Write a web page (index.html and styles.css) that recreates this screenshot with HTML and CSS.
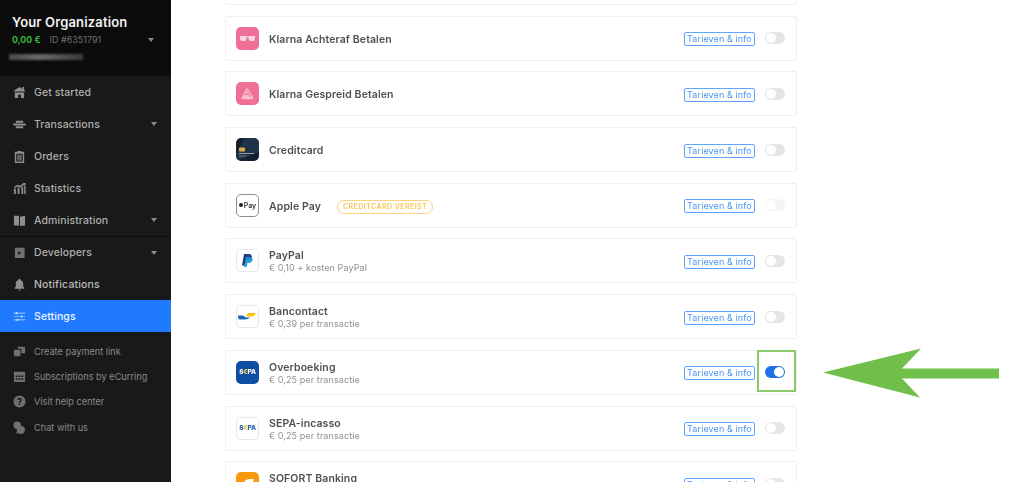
FILE: index.html
```html
<!DOCTYPE html>
<html lang="nl">
<head>
<meta charset="utf-8">
<title>Betaalmethoden</title>
<link rel="stylesheet" href="styles.css">
</head>
<body>
<aside class="sidebar">
  <header class="org">
    <div class="org-name">Your Organization</div>
    <div class="org-meta"><span class="balance">0,00 €</span><span class="org-id">ID #6351791</span><span class="caret org-caret"></span></div>
    <div class="org-blur"></div>
  </header>
  <nav class="nav">
    <a class="nav-item"><svg class="ico" viewBox="0 0 14 14"><path d="M7 1 13 5v1H1V5zM10 1h2v3h-2zM2 7h10v6H8.500V9.500h-3V13H2z"/></svg>Get started</a>
    <a class="nav-item"><svg class="ico" viewBox="0 0 14 14"><path d="M3 3h8v2H3zM1 6h12a1 1 0 0 1 0 2H1a1 1 0 0 1 0-2zM3 9h8v2H3z"/></svg>Transactions<span class="caret"></span></a>
    <a class="nav-item"><svg class="ico" viewBox="0 0 14 14"><path fill-rule="evenodd" d="M2 2h3V1h4v1h3v12H2zM3.500 4v8.500h7V4z"/><path d="M4.500 5h5v6.500h-5z" opacity=".6"/></svg>Orders</a>
    <a class="nav-item"><svg class="ico" viewBox="0 0 14 14"><path d="M1 7h2v6H1zM5 6h2v7H5zM9 5h2v8H9zM12 4h1.500v9H12zM1 5l4-2 3 1 3-3h2.500v2.500H11L8 6 5 4.800 1.500 6.500z"/></svg>Statistics</a>
    <a class="nav-item"><svg class="ico" viewBox="0 0 14 14"><path d="M1 2h5.500v10.500H1zM7.500 3 13 2v10.500l-5.500.500z"/></svg>Administration<span class="caret"></span></a>
    <a class="nav-item nav-item-sep"><svg class="ico" viewBox="0 0 14 14"><path fill-rule="evenodd" d="M2 2h10.500v11H2zM5.500 5.500v4l3.500-2z" opacity=".75"/></svg>Developers<span class="caret"></span></a>
    <a class="nav-item nav-strong"><svg class="ico" viewBox="0 0 14 14"><path d="M6 1h2v1.200A4 4 0 0 1 11 6v3l1.500 2.500h-11L3 9V6a4 4 0 0 1 3-3.800zM5.500 12.500h3L7 14z"/></svg>Notifications</a>
    <a class="nav-item nav-active"><svg class="ico" viewBox="0 0 14 14"><path d="M1 3h12v.8H1zM1 6.600h12v.8H1zM1 10.200h12v.8H1z"/><path d="M3 2.200h1.500v2.400H3zM8.500 5.800H10v2.400H8.500zM4 9.400h1.500v2.400H4z"/></svg>Settings</a>
    <div class="subnav">
      <a class="sub-item"><svg class="ico ico-s" viewBox="0 0 14 14"><path d="M1 5h7v7H2a1 1 0 0 1-1-1z"/><path d="M5 2h7a1 1 0 0 1 1 1v6H9V4H5z"/></svg>Create payment link</a>
      <a class="sub-item"><svg class="ico ico-s" viewBox="0 0 14 14"><path fill-rule="evenodd" d="M1 2h12v11H1zM3 6v1.500h2V6zM6 6v1.500h2V6zM9 6v1.500h2V6zM3 9v1.500h2V9zM6 9v1.500h2V9zM9 9v1.500h2V9z"/></svg>Subscriptions by eCurring</a>
      <a class="sub-item"><svg class="ico ico-s" viewBox="0 0 14 14"><path fill-rule="evenodd" d="M7 .500a6.500 6.500 0 1 1 0 13 6.500 6.500 0 0 1 0-13zM7 3a2.500 2.500 0 0 0-2.500 2.500H6q0-1 1-1t1 1c0 1-1.800 1.200-1.800 3h1.500c0-1.200 1.800-1.500 1.800-3A2.500 2.500 0 0 0 7 3zM6.200 9.300v1.500h1.500V9.300z"/></svg>Visit help center</a>
      <a class="sub-item"><svg class="ico ico-s" viewBox="0 0 14 14"><circle cx="4.500" cy="4.500" r="4"/><path d="M8.500 5a4.500 4.500 0 1 1-2.500 8.300L3.500 14l.8-3A4.500 4.500 0 0 1 8.500 5z"/></svg>Chat with us</a>
    </div>
  </nav>
</aside>
<main class="main">
  <ul class="methods">
    <li class="card"></li>
    <li class="card">
      <span class="logo logo-klarna"><svg viewBox="0 0 23 23"><path d="M4 9h6.500v2.500a2.500 2.500 0 0 1-2.500 2.500H6.500A2.500 2.500 0 0 1 4 11.500zM12.500 9H19v2.500a2.500 2.500 0 0 1-2.500 2.500H15a2.500 2.500 0 0 1-2.500-2.500zM10 9.500h3v1h-3z" fill="#fff" opacity=".7"/></svg></span>
      <div class="info"><div class="name">Klarna Achteraf Betalen</div></div>
      <a class="rates">Tarieven &amp; info</a><span class="toggle"></span>
    </li>
    <li class="card">
      <span class="logo logo-klarna"><svg viewBox="0 0 23 23"><path d="M11 5.500 18 16.500Q11 18.500 5 16.500z" fill="#fff" opacity=".55"/><path d="M11 8 15 15M8 14l5-3M9 10.500l4.500 3.500" stroke="#ef6f97" stroke-width=".8" fill="none"/></svg></span>
      <div class="info"><div class="name">Klarna Gespreid Betalen</div></div>
      <a class="rates">Tarieven &amp; info</a><span class="toggle"></span>
    </li>
    <li class="card">
      <span class="logo logo-card"><svg viewBox="0 0 23 23"><path d="M9 0h14v14L0 23V16z" fill="#2a4560" opacity=".55"/><rect x="3" y="9.500" width="6" height="4" rx="1" fill="#d9ad4e"/><rect x="3" y="15" width="15" height="1" fill="#8b98a6"/><rect x="3" y="17.500" width="7" height="1" fill="#6e7c8a"/></svg></span>
      <div class="info"><div class="name">Creditcard</div></div>
      <a class="rates">Tarieven &amp; info</a><span class="toggle"></span>
    </li>
    <li class="card">
      <span class="logo logo-apple"><span class="apple-dot"></span>Pay</span>
      <div class="info info-row"><div class="name">Apple Pay</div><span class="badge">CREDITCARD VEREIST</span></div>
      <a class="rates">Tarieven &amp; info</a><span class="toggle toggle-off"></span>
    </li>
    <li class="card">
      <span class="logo logo-plain"><svg viewBox="0 0 23 23"><path d="M8 5h5.500a3 3 0 0 1 2 4.500c-.8 1.800-2.200 2.200-4 2.200h-1.200L9.500 16.500H6z" fill="#253b80"/><path d="M10 8h4.500c2.500.500 2.500 2.500 1.700 4-.8 1.500-2.200 2-3.700 2h-1l-.8 4H8z" fill="#179bd7" opacity=".9"/></svg></span>
      <div class="info"><div class="name">PayPal</div><div class="sub">€ 0,10 + kosten PayPal</div></div>
      <a class="rates">Tarieven &amp; info</a><span class="toggle"></span>
    </li>
    <li class="card">
      <span class="logo logo-plain"><svg viewBox="0 0 23 23"><path d="M10 10h10q-2 3.500-5 3.500H10l2-3.500z" fill="#f7c600" transform="translate(0 -2)"/><path d="M2 12h5l3 2h4q-2 2-5 2H4q-2 0-2-2z" fill="#1c66b3" transform="translate(0 -1.500)"/></svg></span>
      <div class="info"><div class="name">Bancontact</div><div class="sub">€ 0,39 per transactie</div></div>
      <a class="rates">Tarieven &amp; info</a><span class="toggle"></span>
    </li>
    <li class="card">
      <span class="logo logo-sepa"><span>S</span><i>€</i><span>PA</span></span>
      <div class="info"><div class="name">Overboeking</div><div class="sub">€ 0,25 per transactie</div></div>
      <a class="rates">Tarieven &amp; info</a><span class="toggle toggle-on"></span>
    </li>
    <li class="card">
      <span class="logo logo-plain logo-sepa-light"><span>S</span><i>€</i><span>PA</span></span>
      <div class="info"><div class="name">SEPA-incasso</div><div class="sub">€ 0,25 per transactie</div></div>
      <a class="rates">Tarieven &amp; info</a><span class="toggle"></span>
    </li>
    <li class="card">
      <span class="logo logo-sofort"><svg viewBox="0 0 23 23"><path d="M7 13q1-6 7-6h4l-1 3h-4q-2 0-3 3z" fill="#fff"/></svg></span>
      <div class="info"><div class="name name-clipped">SOFORT Banking</div></div>
      <a class="rates">Tarieven &amp; info</a><span class="toggle"></span>
    </li>
  </ul>
  <div class="mark-box"></div>
  <svg class="mark-arrow" viewBox="0 0 178 50"><path d="M0 24.500 98 .500 79 20.500H176V30.500H79L97 49.500z"/></svg>
</main>
</body>
</html>
```
FILE: styles.css
```css
* { box-sizing: border-box; }
html, body { height: 100%; }
body {
  margin: 0;
  display: flex;
  height: 482px;
  overflow: hidden;
  background: #fff;
  font-family: Inter, "Liberation Sans", sans-serif;
  filter: blur(.3px);
}
ul { list-style: none; margin: 0; padding: 0; }

/* Sidebar */
.sidebar { width: 171px; flex: none; display: flex; flex-direction: column; background: #191919; }
.org { height: 76px; padding: 14px 12px 0; background: #0b0b0b; }
.org-name { font-size: 13px; line-height: 16px; font-weight: 600; color: #f4f4f4; letter-spacing: .15px; }
.org-meta { display: flex; align-items: center; margin-top: 3px; font-size: 9px; line-height: 14px; }
.balance { color: #38c23f; font-weight: 600; margin-right: 9px; }
.org-id { color: #6f6f6f; }
.org-blur { width: 74px; height: 6px; margin: 7px 0 0 -3px; background: linear-gradient(90deg, #4a4a4a, #6a6a6a 40%, #3c3c3c); filter: blur(1px); }
.caret { margin-left: auto; width: 0; height: 0; border: 3px solid transparent; border-top: 4px solid #8c8c8c; border-bottom: 0; }
.org-caret { margin-right: 5px; }

.nav { flex: 1; }
.nav-item {
  display: flex; align-items: center;
  height: 32px; padding: 0 14px 0 13px;
  font-size: 10.5px; font-weight: 500; color: #aeaeae; letter-spacing: .1px;
}
.nav-item-sep { border-top: 1px solid #0e0e0e; }
.nav-strong { color: #bcbcbc; font-weight: 500; letter-spacing: .15px; }
.nav-active { background: #1f7aff; color: #eef5ff; font-weight: 500; }
.nav-active .ico { fill: #cfe2ff; }
.ico { width: 13px; height: 13px; margin-right: 8px; flex: none; fill: #8f8f8f; }
.ico-s { fill: #707070; }
.subnav { padding-top: 7px; }
.sub-item {
  display: flex; align-items: center;
  height: 25px; padding: 0 13px;
  font-size: 9.2px; color: #8a8a8a;
}
.sub-item:last-child { padding-top: 1px; }

/* Main */
.main { position: relative; flex: 1; min-width: 0; overflow: hidden; padding-left: 54px; }
.methods { display: grid; grid-auto-rows: 45px; row-gap: 10.7px; width: 572px; margin-top: -40px; }
.card {
  display: flex; align-items: center;
  padding: 0 11px 0 10px;
  background: #fff;
  border: 1px solid #efefef;
  border-radius: 2px;
}
.logo {
  position: relative;
  width: 23px; height: 23px; flex: none;
  display: flex; align-items: center; justify-content: center;
  border-radius: 5px; overflow: hidden;
}
.logo svg { width: 23px; height: 23px; display: block; }
.logo-klarna { background: #ef6f97; }
.logo-card { background: #14202e; }
.logo-plain { background: #fff; border: 1px solid #e8e8e8; }
.logo-plain svg { margin: -1px; flex: none; }
.logo-apple { border: 1px solid #8d8d8d; font-size: 7px; font-weight: 600; color: #333; }
.apple-dot { width: 4px; height: 4px; margin-right: 1px; border-radius: 50%; background: #222; }
.logo-sepa, .logo-sepa-light { font-size: 6.5px; font-weight: 800; letter-spacing: -.2px; }
.logo-sepa { background: #0f4fa3; color: #fff; }
.logo-sepa-light { color: #1d5fb5; }
.logo-sepa i, .logo-sepa-light i { font-style: normal; color: #f2c230; }
.logo-sofort { background: #f79a10; }

.info { flex: 1; min-width: 0; margin-left: 10px; padding-top: 3px; }
.info-row { display: flex; align-items: center; }
.name { font-size: 10.5px; line-height: 12px; font-weight: 600; color: #4d5157; letter-spacing: .1px; }
.name-clipped { margin-bottom: 12px; }
.sub { font-size: 9px; line-height: 12px; color: #8c9095; letter-spacing: .1px; }
.badge {
  margin-left: 16px; padding: 0 5px;
  height: 14px; line-height: 12px;
  border: 1px solid #fbd37d; border-radius: 7px;
  font-size: 7px; font-weight: 600; color: #f8c456; letter-spacing: .45px;
}
.rates {
  flex: none; width: 71px; height: 14px; margin: 2px 10px 0 0;
  border: 1px solid #5ba4ff; border-radius: 2px;
  font-size: 9px; line-height: 12px; text-align: center; color: #4b95f2; letter-spacing: .1px;
}
.toggle {
  position: relative; flex: none;
  width: 20px; height: 12px;
  border-radius: 6px;
  background: #e5e5e5;
}
.toggle::after {
  content: ""; position: absolute; left: 1px; top: 1px;
  width: 10px; height: 10px; border-radius: 50%; background: #fff;
}
.toggle-off { background: #f5f5f5; }
.toggle-on { background: #1f6fe8; }
.toggle-on::after { left: 9px; }

/* Annotation overlay */
.mark-box { position: absolute; left: 586px; top: 350px; width: 39px; height: 42px; border: 2px solid #8cc96b; }
.mark-arrow { position: absolute; left: 652px; top: 348px; width: 178px; height: 50px; fill: #6fbf4a; }
```
